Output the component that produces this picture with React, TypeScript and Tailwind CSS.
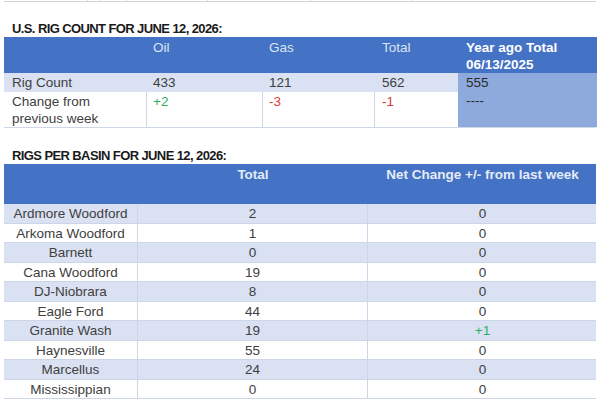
const summary = [
  { label: "Rig Count", oil: "433", gas: "121", total: "562", yearAgo: "555" },
];

const basins: { name: string; total: string; change: string }[] = [
  { name: "Ardmore Woodford", total: "2", change: "0" },
  { name: "Arkoma Woodford", total: "1", change: "0" },
  { name: "Barnett", total: "0", change: "0" },
  { name: "Cana Woodford", total: "19", change: "0" },
  { name: "DJ-Niobrara", total: "8", change: "0" },
  { name: "Eagle Ford", total: "44", change: "0" },
  { name: "Granite Wash", total: "19", change: "+1" },
  { name: "Haynesville", total: "55", change: "0" },
  { name: "Marcellus", total: "24", change: "0" },
  { name: "Mississippian", total: "0", change: "0" },
];

function changeColor(v: string) {
  if (v.startsWith("+")) return "text-[#2fae5e]";
  if (v.startsWith("-")) return "text-[#d9403a]";
  return "text-[#404040]";
}

export default function App() {
  const row = summary[0];
  return (
    <div className="w-[600px] h-[400px] overflow-hidden bg-white font-['Liberation_Sans',Arial,sans-serif] text-[13.5px] text-[#404040]">
      {/* tail of the table above */}
      <div className="mx-[4px] grid h-[2px] grid-cols-[84px_12px_27px_81px_103px_101px_184px] border-b border-[#d4d4d4]">
        <div className="border-r border-[#dcdcdc]"></div>
        <div className="border-r border-[#dcdcdc]"></div>
        <div className="border-r border-[#dcdcdc]"></div>
        <div className="border-r border-[#dcdcdc]"></div>
        <div className="border-r border-[#dcdcdc]"></div>
        <div className="border-r border-[#dcdcdc]"></div>
        <div></div>
      </div>

      <div className="mt-[19px] pl-[12px] text-[13px] font-bold leading-[16px] text-[#1a1a1a] tracking-[-0.6px]">
        U.S. RIG COUNT FOR JUNE 12, 2026:
      </div>

      <div className="mx-[4px] grid grid-cols-[143px_116px_112px_83px_139px] border-b border-[#d0d7e6]">
        <div className="h-[36px] bg-[#4472c4]"></div>
        <div className="h-[36px] bg-[#4472c4] px-[6px] pt-[2px] leading-[17px] text-[#dbe4f5]">Oil</div>
        <div className="h-[36px] bg-[#4472c4] px-[6px] pt-[2px] leading-[17px] text-[#dbe4f5]">Gas</div>
        <div className="h-[36px] bg-[#4472c4] px-[7px] pt-[2px] leading-[17px] text-[#dbe4f5]">Total</div>
        <div className="h-[36px] bg-[#4472c4] px-[8px] pt-[2px] leading-[17px] font-bold text-white">
          Year ago Total
          <br />
          06/13/2025
        </div>

        <div className="h-[19px] bg-[#d9e1f2] px-[8px] leading-[19px]">{row.label}</div>
        <div className="h-[19px] bg-[#d9e1f2] px-[6px] leading-[19px]">{row.oil}</div>
        <div className="h-[19px] bg-[#d9e1f2] px-[6px] leading-[19px]">{row.gas}</div>
        <div className="h-[19px] bg-[#d9e1f2] px-[7px] leading-[19px]">{row.total}</div>
        <div className="row-span-2 bg-[#8eaadc] px-[8px] leading-[19px] text-[#2a2a2a]">
          {row.yearAgo}
          <div className="leading-[17px]">----</div>
        </div>

        <div className="h-[35px] border-r border-[#d0d7e6] px-[8px] pt-[1px] leading-[17px]">
          Change from
          <br />
          previous week
        </div>
        <div className="h-[35px] border-r border-[#d0d7e6] px-[6px] pt-[1px] leading-[17px] text-[#2fae5e]">+2</div>
        <div className="h-[35px] border-r border-[#d0d7e6] px-[6px] pt-[1px] leading-[17px] text-[#d9403a]">-3</div>
        <div className="h-[35px] px-[7px] pt-[1px] leading-[17px] text-[#d9403a]">-1</div>
      </div>

      <div className="mt-[20px] pl-[12px] text-[13px] font-bold leading-[16px] text-[#1a1a1a] tracking-[-0.6px]">
        RIGS PER BASIN FOR JUNE 12, 2026:
      </div>

      <div className="mx-[4px]">
        <div className="grid h-[40px] grid-cols-[134px_230px_229px] bg-[#4472c4] font-bold leading-[17px] text-[#e3ebf8]">
          <div></div>
          <div className="pt-[2px] text-center">Total</div>
          <div className="pt-[2px] text-center">Net Change +/- from last week</div>
        </div>
        {basins.map((b, i) => (
          <div
            key={b.name}
            className={`grid h-[19.5px] grid-cols-[134px_230px_229px] border-b border-[#cdd6e8] leading-[19px] ${
              i % 2 === 0 ? "bg-[#d9e1f2]" : "bg-white"
            }`}
          >
            <div className="border-r border-[#cdd6e8] text-center">{b.name}</div>
            <div className="border-r border-[#cdd6e8] text-center">{b.total}</div>
            <div className={`text-center ${changeColor(b.change)}`}>{b.change}</div>
          </div>
        ))}
      </div>
    </div>
  );
}
